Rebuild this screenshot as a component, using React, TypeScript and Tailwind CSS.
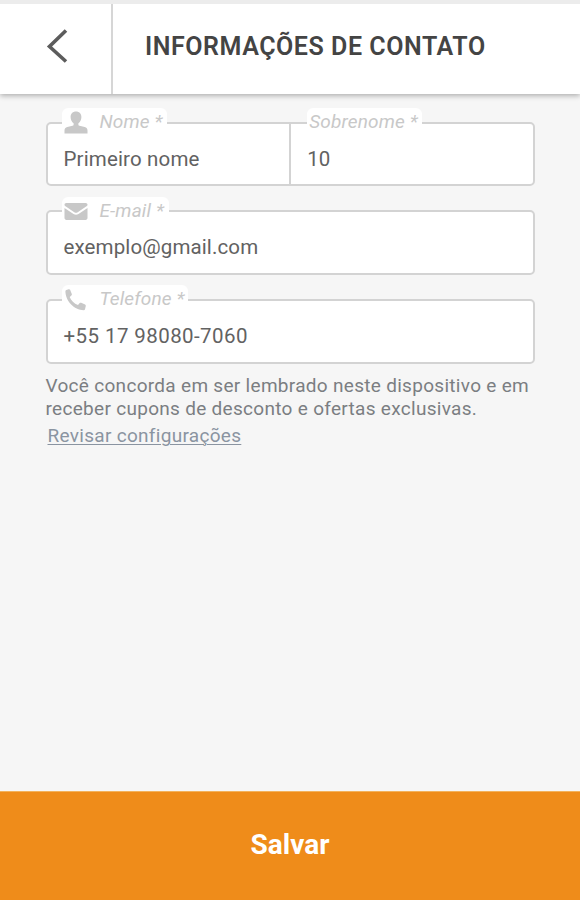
import type { ReactNode } from "react";

const UserIcon = () => (
  <svg viewBox="0 0 24 24" className="h-6 w-6" fill="currentColor">
    <path d="M12 1.500c3.200 0 5.400 2.100 5.400 5.400 0 2.900-1.300 5.100-3 6.300v1.500c0 .6.400.9 1.100 1.100l5.200 1.300c1.900.5 2.800 1.700 2.800 3.500v2.800H.5v-2.800c0-1.800.9-3 2.800-3.500l5.200-1.300c.7-.2 1.100-.5 1.100-1.100v-1.500c-1.700-1.200-3-3.400-3-6.300 0-3.300 2.200-5.400 5.400-5.400Z" />
  </svg>
);

const MailIcon = () => (
  <svg viewBox="0 0 24 24" className="h-6 w-6" fill="currentColor">
    <path d="M2.300 4h19.400c1.100 0 1.800.8 1.800 1.700 0 .7-.4 1.200-1 1.600l-8.800 6c-1.100.7-2.300.7-3.400 0l-8.800-6c-.6-.4-1-.9-1-1.600C.5 4.800 1.200 4 2.300 4Z" />
    <path d="M.5 9l9 6.100c1.600 1 3.400 1 5 0l9-6.100v10c0 1.100-.8 1.900-1.900 1.900H2.400C1.300 20.900.5 20.100.5 19V9Z" />
  </svg>
);

const PhoneIcon = () => (
  <svg viewBox="0 0 24 24" className="h-6 w-6" fill="currentColor">
    <path d="M4.600 2.200c.6-.2 1.200 0 1.500.6l1.700 4.100c.2.500.1 1.100-.4 1.500L5.700 9.900c1.300 3.600 4.400 6.500 8.300 8.100l1.700-1.900c.4-.5 1-.6 1.500-.3l3.900 1.800c.6.300.8.900.7 1.500l-.8 3.200c-.2.600-.6 1-1.200 1C10 23.100 1.500 14 1.400 4.300c0-.6.3-1.100.9-1.300l2.300-.8Z" />
  </svg>
);

const Legend = ({
  icon,
  className,
  children,
}: {
  icon?: ReactNode;
  className: string;
  children: ReactNode;
}) => (
  <span
    className={`absolute flex h-7 items-center rounded-md bg-white text-[#c8c8c8] ${className}`}
  >
    {icon}
    <span className="whitespace-nowrap text-[19px] italic leading-7 tracking-[0.15px]">
      {children}
    </span>
  </span>
);

const Field = ({
  legend,
  value,
  className = "",
}: {
  legend: ReactNode;
  value: ReactNode;
  className?: string;
}) => (
  <div className={`relative flex-1 pt-[21px] ${className}`}>
    {legend}
    <div className="whitespace-nowrap text-[20.5px] leading-7 text-[#626262]">
      {value}
    </div>
  </div>
);

const App = () => {
  return (
    <div className="flex h-[900px] w-[580px] flex-col overflow-hidden bg-[#f6f6f6] font-[Roboto,sans-serif]">
      <header className="relative z-10 flex h-[94px] shrink-0 border-t-4 border-[#ececec] bg-white shadow-[0_2px_5px_rgba(0,0,0,0.28)]">
        <button
          aria-label="Voltar"
          className="flex w-[113px] items-center justify-center border-r-2 border-[#d6d6d6] pb-[6px] pl-[3px]"
        >
          <svg
            viewBox="0 0 22 34"
            className="h-[34px] w-[22px]"
            fill="none"
            stroke="#5c5c5c"
            strokeWidth="3.600"
          >
            <path d="M20 1.500L3.500 17.500L20 32.500" />
          </svg>
        </button>
        <h1 className="whitespace-nowrap pl-8 pt-[25px] text-[25px] font-semibold leading-9 tracking-[0.55px] text-[#444]">
          INFORMAÇÕES DE CONTATO
        </h1>
      </header>

      <main className="flex flex-1 flex-col pl-[45.5px] pr-[45px] pt-[28px]">
        <div className="flex h-[64px] rounded-[5px] border-2 border-[#d3d3d3] bg-white">
          <Field
            className="pl-4 tracking-[0.15px]"
            legend={
              <Legend
                icon={<UserIcon />}
                className="-top-4 left-[14px] w-[105px] gap-3 pl-[2px]"
              >
                Nome *
              </Legend>
            }
            value="Primeiro nome"
          />
          <Field
            className="border-l-2 border-[#d3d3d3] pl-4"
            legend={
              <Legend className="-top-4 left-4 w-[115px] pl-[2px]">
                Sobrenome *
              </Legend>
            }
            value="10"
          />
        </div>

        <div className="mt-[24px] flex h-[65px] rounded-[5px] border-2 border-[#d3d3d3] bg-white">
          <Field
            className="pl-4 tracking-[0.12px]"
            legend={
              <Legend
                icon={<MailIcon />}
                className="-top-[15px] left-[14px] w-[107px] gap-3 pl-[2px]"
              >
                E-mail *
              </Legend>
            }
            value="exemplo@gmail.com"
          />
        </div>

        <div className="mt-[24px] flex h-[65px] rounded-[5px] border-2 border-[#d3d3d3] bg-white">
          <Field
            className="pl-4 tracking-[0.42px]"
            legend={
              <Legend
                icon={<PhoneIcon />}
                className="-top-4 left-[14px] w-[126px] gap-3 pl-[2px]"
              >
                Telefone *
              </Legend>
            }
            value="+55 17 98080-7060"
          />
        </div>

        <p className="mt-[10px] whitespace-nowrap text-[19px] leading-[23px] tracking-[0.3px] text-[#7b7e82]">
          Você concorda em ser lembrado neste dispositivo e em
          <br />
          receber cupons de desconto e ofertas exclusivas.
        </p>
        <a
          href="#"
          className="mt-1 self-start pl-[2px] text-[19px] leading-6 tracking-[0.3px] text-[#8a94a1] underline decoration-1 underline-offset-2"
        >
          Revisar configurações
        </a>
      </main>

      <button className="h-[109px] shrink-0 border-t border-[#f3b25c] bg-[#ef8c1a] pb-[2px] text-[28px] font-bold text-white">
        Salvar
      </button>
    </div>
  );
};

export default App;
